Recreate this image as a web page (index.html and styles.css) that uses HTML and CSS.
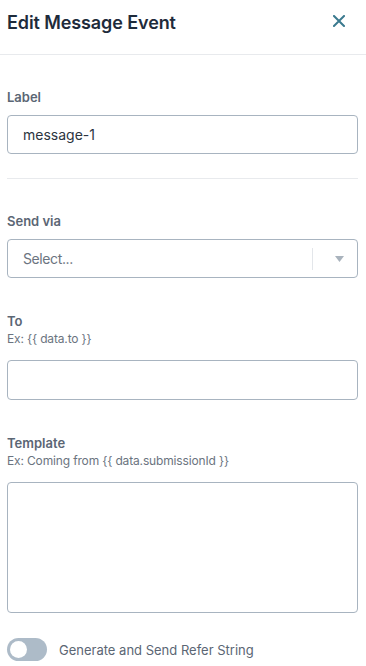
FILE: index.html
```html
<!DOCTYPE html>
<html>
<head>
<meta charset="utf-8">
<link rel="stylesheet" href="styles.css">
</head>
<body>
<div class="panel">
  <header class="head">
    <h1 class="title">Edit Message Event</h1>
    <button class="close" aria-label="Close">
      <svg width="12" height="12" viewBox="0 0 12 12"><path d="M1 1L11 11M11 1L1 11" stroke="#3b7a8f" stroke-width="2" stroke-linecap="square"/></svg>
    </button>
  </header>
  <div class="body">
    <div class="field first">
      <label class="lbl">Label</label>
      <div class="input"><span class="val">message-1</span></div>
    </div>
    <hr class="sep">
    <div class="field">
      <label class="lbl">Send via</label>
      <div class="input select">
        <span class="ph">Select...</span>
        <span class="ind">
          <span class="bar"></span>
          <svg class="arrow" width="9" height="6" viewBox="0 0 9 6"><path d="M0 0H9L4.5 6Z" fill="#a9b3bd"/></svg>
        </span>
      </div>
    </div>
    <div class="field wide">
      <label class="lbl">To</label>
      <div class="hint">Ex: {{ data.to }}</div>
      <div class="input tall"></div>
    </div>
    <div class="field wide">
      <label class="lbl">Template</label>
      <div class="hint">Ex: Coming from {{ data.submissionId }}</div>
      <div class="input area"></div>
    </div>
    <div class="toggle-row">
      <span class="toggle"><span class="knob"></span></span>
      <span class="tlabel">Generate and Send Refer String</span>
    </div>
  </div>
</div>
</body>
</html>
```
FILE: styles.css
```css
* { box-sizing: border-box; }
html, body { margin: 0; padding: 0; background: #fff; }
body { font-family: Inter, "Noto Sans", sans-serif; color: #1f2a37; }
.panel { width: 366px; }
.head {
  height: 55px;
  display: flex;
  align-items: center;
  justify-content: space-between;
  padding: 0 21px 0 7px;
  border-bottom: 1px solid #e8eaed;
}
.title { margin: 0; font-size: 18px; font-weight: 600; color: #1e2b3b; letter-spacing: -0.1px; position: relative; top: -5px; }
.close { border: 0; background: none; padding: 0; width: 12px; height: 12px; display: flex; position: relative; top: -6px; }
.body { padding: 0 8px 0 7px; }
.field { margin-top: 34px; display: flex; flex-direction: column; }
.field.wide { margin-top: 35px; }
.lbl { font-size: 13px; font-weight: 600; color: #5b6674; line-height: 16px; margin-bottom: 10px; }
.hint { font-size: 12px; color: #6b7480; line-height: 15px; margin-top: -8px; margin-bottom: 14px; letter-spacing: -0.15px; }
.input {
  height: 39px;
  border: 1px solid #a8b4c0;
  border-radius: 4px;
  display: flex;
  align-items: center;
  padding: 0 15px;
  font-size: 14px;
}
.tall { height: 40px; }
.val { color: #2b3440; }
.area { height: 131px; }
.sep { border: 0; border-top: 1px solid #e8eaed; margin: 24px 0 0; }
.select { padding-right: 0; }
.ph { color: #6b7480; flex: 1; letter-spacing: -0.4px; }
.ind { display: flex; align-items: center; height: 100%; }
.bar { width: 1px; height: 22px; background: #e3e6ea; }
.arrow { margin: 0 13px 0 22px; }
.toggle-row { display: flex; align-items: center; gap: 12px; margin-top: 25px; }
.toggle { width: 40px; height: 23px; border-radius: 12px; background: #adbbc8; position: relative; display: block; }
.knob { position: absolute; left: 3px; top: 3px; width: 17px; height: 17px; border-radius: 50%; background: #fff; }
.tlabel { font-size: 13px; color: #5b6674; }
```
